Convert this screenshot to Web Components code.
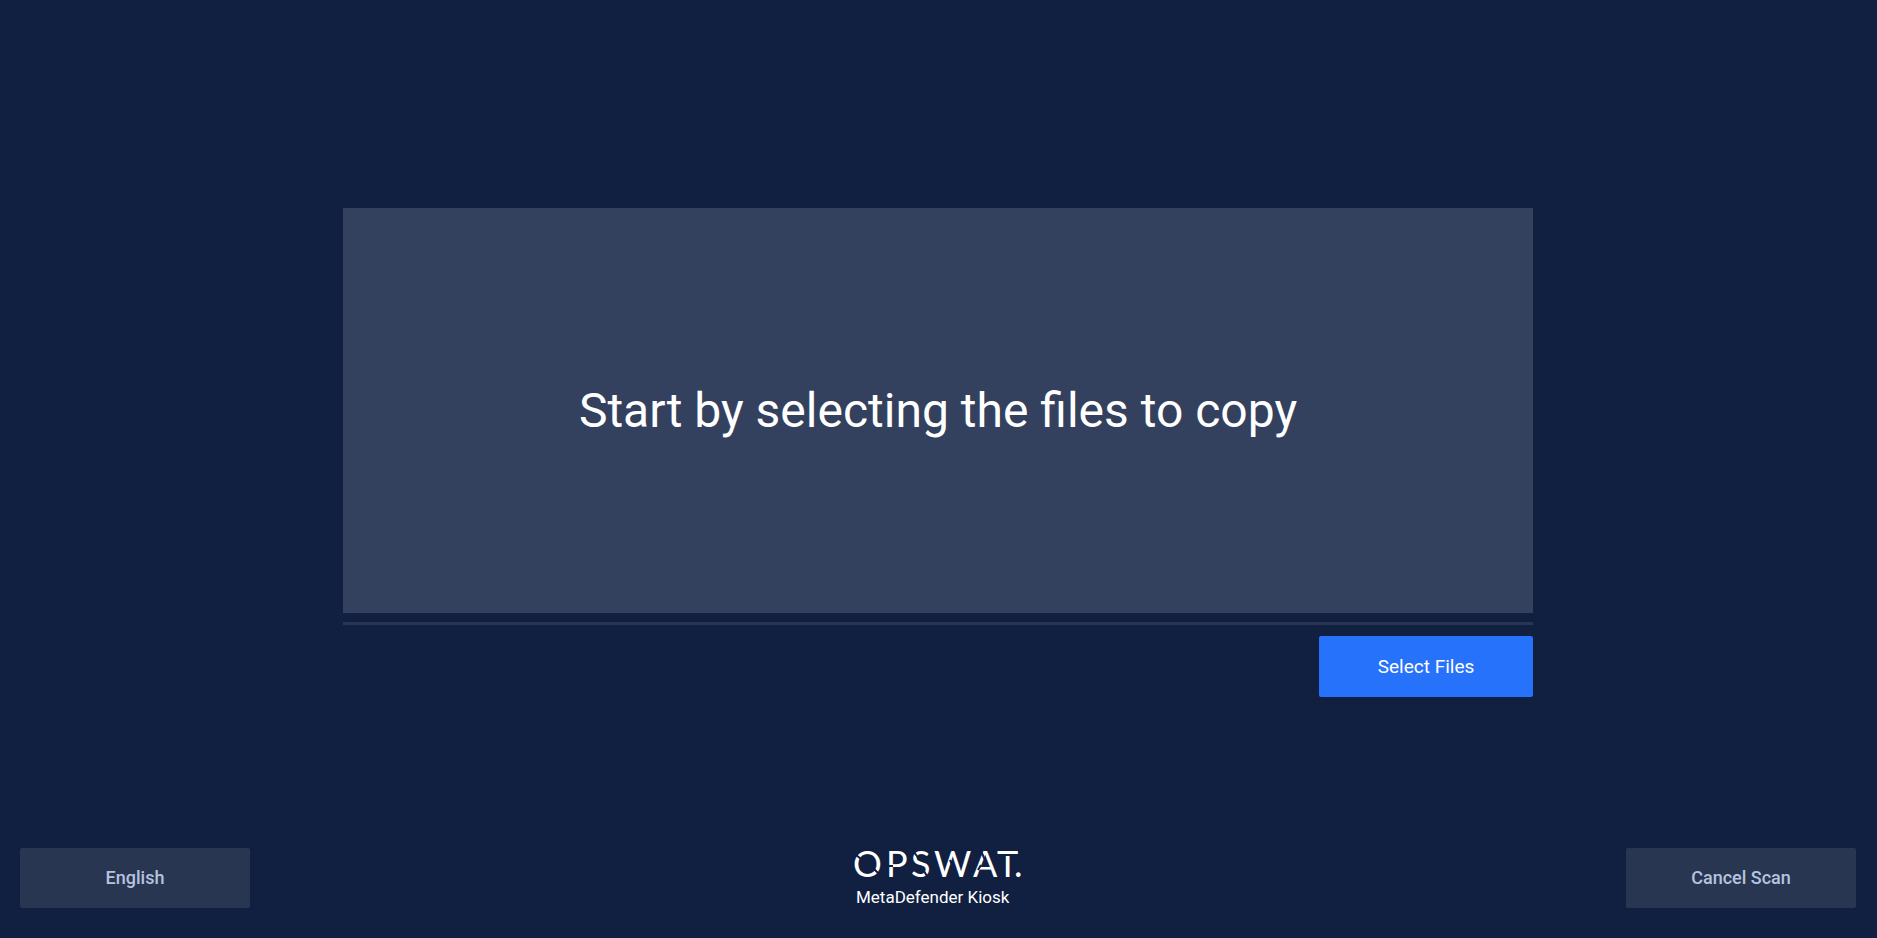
<!DOCTYPE html>
<html lang="en">
<head>
<meta charset="utf-8">
<meta name="viewport" content="width=device-width, initial-scale=1">
<title>MetaDefender Kiosk</title>
<style>
  html, body { height: 100%; }
  body {
    margin: 0;
    background: #111f41;
    color: #fff;
    font-family: Roboto, "Liberation Sans", sans-serif;
  }
</style>
</head>
<body>
<kiosk-app></kiosk-app>

<template id="kiosk-app">
  <style>
    :host {
      display: grid;
      grid-template-rows: 1fr auto;
      min-height: 100vh;
      box-sizing: border-box;
      padding: 0 21px 30px 20px;
    }
    main { display: grid; align-content: center; justify-items: center; padding-top: 64px; }
    footer {
      display: grid;
      grid-template-columns: 1fr auto 1fr;
      align-items: end;
    }
    footer kiosk-button:last-child { justify-self: end; }
  </style>
  <main>
    <file-picker>
      <span>Start by selecting the files to copy</span>
      <kiosk-button slot="action" variant="primary">Select Files</kiosk-button>
    </file-picker>
  </main>
  <footer>
    <kiosk-button>English</kiosk-button>
    <kiosk-brand>MetaDefender Kiosk</kiosk-brand>
    <kiosk-button>Cancel Scan</kiosk-button>
  </footer>
</template>

<template id="file-picker">
  <style>
    :host { display: block; width: 100%; max-width: 1190px; }
    h1 {
      display: grid;
      place-items: center;
      min-height: 405px;
      margin: 0;
      background: #34415e;
      font-size: 48px;
      font-weight: 400;
      line-height: 56px;
      text-align: center;
    }
    hr { height: 3px; margin: 9px 0 11px; border: 0; background: #293553; }
    .actions { display: flex; justify-content: flex-end; }
  </style>
  <h1><slot></slot></h1>
  <hr>
  <div class="actions"><slot name="action"></slot></div>
</template>

<template id="kiosk-button">
  <style>
    :host { display: block; width: 230px; }
    :host([variant="primary"]) { width: 214px; }
    button {
      display: block;
      width: 100%;
      height: 60px;
      padding: 0;
      border: 0;
      border-radius: 2px;
      background: #293652;
      color: #b6c3df;
      font: 500 18px/24px Roboto, "Liberation Sans", sans-serif;
      cursor: pointer;
    }
    :host([variant="primary"]) button {
      height: 61px;
      background: #2672fb;
      color: #fff;
      font-size: 19px;
      font-weight: 400;
    }
  </style>
  <button type="button"><slot></slot></button>
</template>

<template id="kiosk-brand">
  <style>
    :host { display: block; width: 170px; font-size: 17px; line-height: 22px; }
    svg { display: block; width: 170px; height: 45px; overflow: visible; }
    text { fill: #fff; font: 400 36px Lato, "Liberation Sans", sans-serif; }
    path { fill: none; stroke: #111f41; stroke-width: 2; }
    div { padding: 0 3px; white-space: nowrap; }
  </style>
  <svg viewBox="0 0 170 45">
    <text x="0 33 58 81 120 144 161" y="36">OPSWAT.</text>
    <!-- stencil cuts -->
    <path d="M2 13l6 5M21 28l6 6M35 25h5M61 11l5 7M69 27l5 8M97 19l4 9M128 10l4 9M125 29l3 -5M145 14h21"/>
  </svg>
  <div><slot></slot></div>
</template>

<script>
  for (const name of ["kiosk-button", "kiosk-brand", "file-picker", "kiosk-app"]) {
    customElements.define(name, class extends HTMLElement {
      constructor() {
        super();
        this.attachShadow({ mode: "open" })
          .append(document.getElementById(name).content.cloneNode(true));
      }
    });
  }
</script>
</body>
</html>
